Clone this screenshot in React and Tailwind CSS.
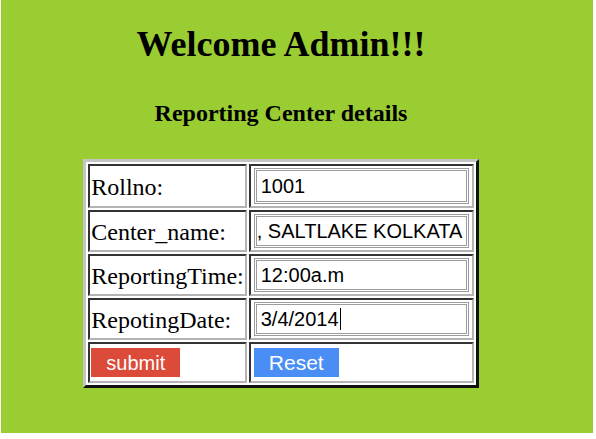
const rows = [
    { label: 'Rollno:', value: '1001', h: 'h-[44px]', ih: 'h-[36px]' },
    { label: 'Center_name:', value: ', SALTLAKE KOLKATA', h: 'h-[42px]', ih: 'h-[34px]', tight: true },
    { label: 'ReportingTime:', value: '12:00a.m', h: 'h-[42px]', ih: 'h-[34px]' },
    { label: 'RepotingDate:', value: '3/4/2014', h: 'h-[42px]', ih: 'h-[34px]', caret: true },
];

const cell = "border-2 border-solid border-t-[#333] border-l-[#333] border-r-[#b4b4b4] border-b-[#b4b4b4]";

const App = () => {
    return (
        <div className="bg-white w-[596px] h-[439px]">
            <div className="ml-[1px] w-[592px] h-[433px] bg-[#9acd32]">
                <div className="w-[560px] flex flex-col items-center font-['Liberation_Serif',serif] text-black">
                    <h1 className="pt-[26px] text-[36px] leading-none font-bold">Welcome Admin!!!</h1>
                    <h3 className="mt-[39px] text-[24px] leading-none font-bold">Reporting Center details</h3>

                    <table className="mt-[34px] bg-white border-separate border-spacing-[2px] border-[3px] border-solid border-t-[#c4c4c4] border-l-[#c4c4c4] border-r-[#111] border-b-[#111]">
                        <tbody>
                            {rows.map((row) => (
                                <tr key={row.label}>
                                    <td className={`${cell} ${row.h} p-px pt-[3px] text-[24px] leading-none whitespace-nowrap align-middle`}>
                                        {row.label}
                                    </td>
                                    <td className={`${cell} ${row.h} px-[3px] py-0 align-middle`}>
                                        <div
                                            className={`${row.ih} w-[215px] border-[3px] border-double border-[#9c9c9c] flex items-center overflow-hidden whitespace-nowrap font-['Liberation_Sans',sans-serif] text-[20px] text-black ${row.tight ? 'pl-0' : 'pl-[4px]'}`}
                                        >
                                            {row.value}
                                            {row.caret && <span className="ml-px w-px h-[22px] bg-black" />}
                                        </div>
                                    </td>
                                </tr>
                            ))}
                            <tr>
                                <td className={`${cell} h-[41px] p-px align-middle`}>
                                    <button className="w-[89px] h-[29px] bg-[#dc4a39] text-white text-[20px] leading-none font-['Liberation_Sans',sans-serif]">
                                        submit
                                    </button>
                                </td>
                                <td className={`${cell} h-[41px] px-[3px] py-0 align-middle`}>
                                    <button className="w-[85px] h-[29px] bg-[#4a8ef5] text-white text-[21px] leading-none font-['Liberation_Sans',sans-serif]">
                                        Reset
                                    </button>
                                </td>
                            </tr>
                        </tbody>
                    </table>
                </div>
            </div>
        </div>
    );
};

export default App;
